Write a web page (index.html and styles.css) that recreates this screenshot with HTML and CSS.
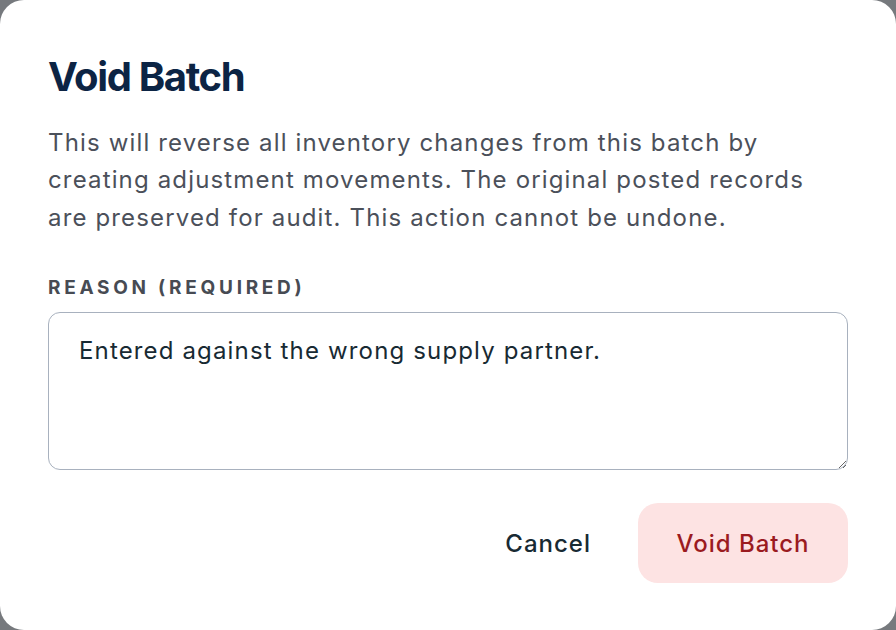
FILE: index.html
```html
<!DOCTYPE html>
<html lang="en">
<head>
<meta charset="utf-8">
<title>Void Batch</title>
<link rel="stylesheet" href="styles.css">
</head>
<body>
<div class="modal" role="dialog" aria-labelledby="void-title">
  <h1 class="modal-title" id="void-title">Void Batch</h1>
  <p class="modal-desc">This will reverse all inventory changes from this batch by creating adjustment movements. The original posted records are preserved for audit. This action cannot be undone.</p>
  <label class="field-label" for="reason">Reason (required)</label>
  <textarea class="field-input" id="reason">Entered against the wrong supply partner.</textarea>
  <div class="actions">
    <button class="btn btn-ghost" type="button">Cancel</button>
    <button class="btn btn-danger" type="button">Void Batch</button>
  </div>
</div>
</body>
</html>
```

FILE: styles.css
```css
* {
  box-sizing: border-box;
}

html, body {
  margin: 0;
  padding: 0;
  height: 100%;
}

body {
  background: #76797d;
  font-family: Inter, "Noto Sans", "Liberation Sans", sans-serif;
}

.modal {
  width: 896px;
  height: 630px;
  background: #ffffff;
  border-radius: 24px;
  padding: 52px 48px 47px;
  display: flex;
  flex-direction: column;
}

.modal-title {
  margin: 0;
  font-size: 40px;
  line-height: 50px;
  font-weight: 700;
  letter-spacing: -0.034em;
  color: #0c2444;
}

.modal-desc {
  margin: 21.5px 0 0;
  font-size: 24px;
  line-height: 37.5px;
  letter-spacing: 1.15px;
  color: #4b505a;
}

.field-label {
  display: block;
  margin-top: 38px;
  font-size: 19px;
  line-height: 27px;
  font-weight: 700;
  letter-spacing: 0.195em;
  text-transform: uppercase;
  color: #474b53;
}

.field-input {
  display: block;
  margin-top: 11px;
  width: 800px;
  height: 158px;
  padding: 19px 30px;
  border: 1.5px solid #a8b1be;
  border-radius: 12px;
  font-family: inherit;
  font-size: 24px;
  line-height: 37.5px;
  letter-spacing: 1.15px;
  color: #182a33;
  background: #ffffff;
  resize: vertical;
  outline: none;
}

.actions {
  margin-top: 33px;
  display: flex;
  justify-content: flex-end;
  gap: 12px;
}

.btn {
  height: 80px;
  border: none;
  border-radius: 20px;
  font-family: inherit;
  font-size: 24px;
  font-weight: 500;
  letter-spacing: 1px;
  cursor: pointer;
}

.btn-ghost {
  background: transparent;
  color: #182a33;
  padding: 0 35px;
}

.btn-danger {
  background: #fde3e3;
  color: #9b1b1f;
  padding: 0;
  width: 210px;
}
```
